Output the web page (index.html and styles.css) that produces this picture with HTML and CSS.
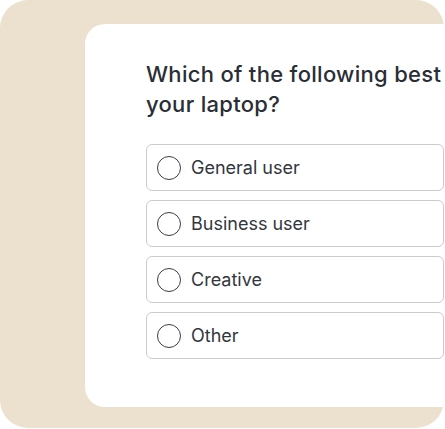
FILE: index.html
```html
<!DOCTYPE html>
<html lang="en">
<head>
<meta charset="utf-8">
<link rel="stylesheet" href="styles.css">
</head>
<body>
<div class="frame">
  <div class="card">
    <h1 class="question">Which of the following best describes your laptop?</h1>
    <div class="options">
      <label class="option"><span class="radio"></span><span class="label">General user</span></label>
      <label class="option"><span class="radio"></span><span class="label">Business user</span></label>
      <label class="option"><span class="radio"></span><span class="label">Creative</span></label>
      <label class="option"><span class="radio"></span><span class="label">Other</span></label>
    </div>
  </div>
</div>
</body>
</html>
```
FILE: styles.css
```css
html, body {
  margin: 0;
  padding: 0;
  background: #ffffff;
}
body {
  width: 445px;
  height: 429px;
  overflow: hidden;
  font-family: Inter, "Noto Sans", sans-serif;
}
.frame {
  box-sizing: border-box;
  width: 444px;
  height: 428px;
  background: #ebe1ce;
  border-radius: 28px;
  padding: 24px 0 0 85px;
  overflow: hidden;
}
.card {
  box-sizing: border-box;
  width: 560px;
  height: 383px;
  background: #ffffff;
  border-radius: 20px 0 0 20px;
  padding: 35px 0 0 61px;
}
.question {
  margin: 0;
  width: 440px;
  font-size: 22px;
  line-height: 30px;
  font-weight: 500;
  color: #2a2e35;
  letter-spacing: 0.3px;
}
.options {
  margin-top: 25px;
  display: flex;
  flex-direction: column;
  gap: 9px;
  width: 298px;
}
.option {
  box-sizing: border-box;
  height: 47px;
  border: 1px solid #cbcbcb;
  border-radius: 6px;
  display: flex;
  align-items: center;
  padding-left: 10px;
  gap: 10px;
}
.radio {
  box-sizing: border-box;
  width: 24px;
  height: 24px;
  border: 1.5px solid #3a3d43;
  border-radius: 50%;
  flex: none;
}
.label {
  font-size: 18px;
  color: #33373d;
  font-weight: 400;
}
```
